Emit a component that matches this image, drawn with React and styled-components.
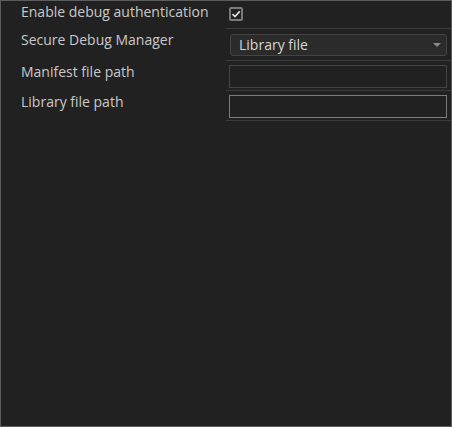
import React from 'react';
import styled, { createGlobalStyle } from 'styled-components';

const GlobalStyle = createGlobalStyle`
  html, body {
    margin: 0;
    padding: 0;
    background: #212121;
  }
  * {
    box-sizing: border-box;
  }
`;

const Panel = styled.div`
  width: 452px;
  height: 427px;
  background: #212121;
  border: 1px solid #5c5c5c;
  font-family: 'Open Sans', 'Liberation Sans', sans-serif;
  font-size: 14px;
  color: #c9c9c9;
`;

const Grid = styled.div`
  display: grid;
  grid-template-columns: 225px 1fr;
`;

const Label = styled.div`
  padding: 1px 0 0 20px;
  line-height: 19px;
  white-space: nowrap;
`;

const Value = styled.div`
  height: ${(p) => p.$h}px;
  padding: ${(p) => p.$pt}px 3px 0 3px;
  border-bottom: 1px solid #3b3b3b;
`;

const Check = styled.div`
  width: 14px;
  height: 14px;
  border: 2px solid #7a7a7a;
  border-radius: 2px;
  display: flex;
  align-items: center;
  justify-content: center;
  svg {
    width: 10px;
    height: 10px;
  }
`;

const Select = styled.div`
  position: relative;
  width: 217px;
  height: 22px;
  margin-left: 1px;
  background: #2b2b2b;
  border: 1px solid #444;
  border-radius: 3px;
  padding-left: 8px;
  line-height: 20px;
  color: #d6d6d6;

  &::after {
    content: '';
    position: absolute;
    right: 5px;
    top: 8px;
    border-left: 4px solid transparent;
    border-right: 4px solid transparent;
    border-top: 4px solid #8a8a8a;
  }
`;

const Input = styled.div`
  width: 218px;
  height: 23px;
  background: #212121;
  border: 1px solid ${(p) => (p.$active ? '#7c7c7c' : '#454545')};
`;

export default function App() {
  return (
    <>
      <GlobalStyle />
      <Panel>
        <Grid>
          <Label>Enable debug authentication</Label>
          <Value $h={28} $pt={6}>
            <Check>
              <svg viewBox="0 0 10 10" fill="none" stroke="#e0e0e0" strokeWidth="1.6">
                <path d="M1.5 5.2 L4 7.6 L8.7 2.4" />
              </svg>
            </Check>
          </Value>
          <Label>Secure Debug Manager</Label>
          <Value $h={32} $pt={5}>
            <Select>Library file</Select>
          </Value>
          <Label>Manifest file path</Label>
          <Value $h={30} $pt={4}>
            <Input />
          </Value>
          <Label>Library file path</Label>
          <Value $h={30} $pt={4}>
            <Input $active />
          </Value>
        </Grid>
      </Panel>
    </>
  );
}
